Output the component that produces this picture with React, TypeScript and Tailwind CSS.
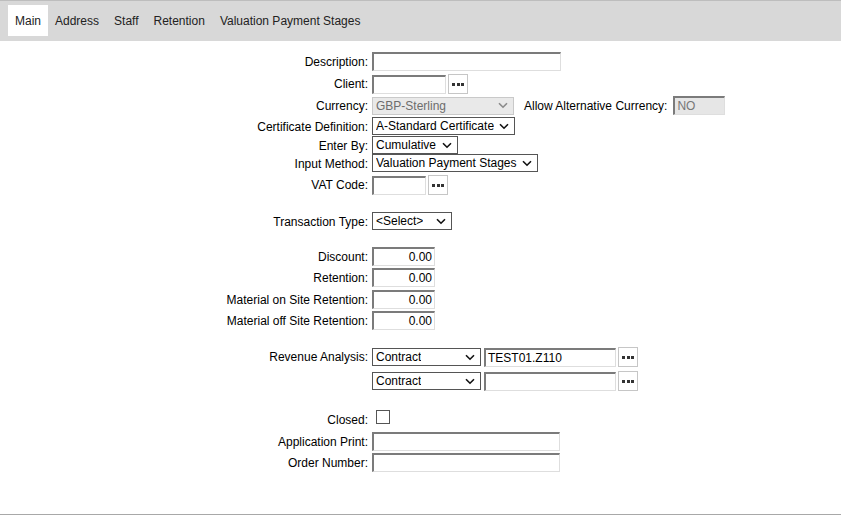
import React from 'react'

const tabs = ['Main', 'Address', 'Staff', 'Retention', 'Valuation Payment Stages']

function Chevron({ muted }: { muted?: boolean }) {
  return (
    <svg width="10" height="7" viewBox="0 0 10 7" className="shrink-0">
      <path d="M1 1.2 L5 5.2 L9 1.2" fill="none" stroke={muted ? '#8a8a8a' : '#111'} strokeWidth="1.6" />
    </svg>
  )
}

function Select({ value, w, disabled }: { value: string; w: string; disabled?: boolean }) {
  return (
    <div
      className={`${w} h-[18px] flex items-center justify-between pl-[3px] pr-[5px] border ${
        disabled ? 'bg-[#e9e9e9] border-[#c9c9c9] text-[#6d6d6d]' : 'bg-white border-[#555555] text-black'
      }`}
    >
      <span className="truncate">{value}</span>
      <Chevron muted={disabled} />
    </div>
  )
}

function TextInput({ w, value, right, disabled }: { w: string; value?: string; right?: boolean; disabled?: boolean }) {
  return (
    <div
      className={`${w} h-[19px] flex items-center border-t-2 border-l-2 border-r border-b border-t-[#7b7b7b] border-l-[#7b7b7b] border-r-[#dedede] border-b-[#dedede] px-[2px] ${
        right ? 'justify-end' : ''
      } ${disabled ? 'bg-[#e6e6e6] text-[#777777]' : 'bg-white text-black'}`}
    >
      {value}
    </div>
  )
}

function Dots() {
  return (
    <div className="w-[20px] h-[20px] border border-[#c6c6c6] bg-white flex items-center justify-center gap-[1.5px] ml-[2px]">
      <span className="w-[3px] h-[3px] bg-[#333]" />
      <span className="w-[3px] h-[3px] bg-[#333]" />
      <span className="w-[3px] h-[3px] bg-[#333]" />
    </div>
  )
}

function Row({ label, h, children }: { label?: string; h: string; children: React.ReactNode }) {
  return (
    <div className={`flex items-start ${h}`}>
      <div className="w-[372px] h-[19px] flex items-center justify-end pr-[4px]">{label ? `${label}:` : ''}</div>
      <div className="flex items-center">{children}</div>
    </div>
  )
}

export default function App() {
  return (
    <div className="w-[841px] h-[519px] bg-white text-[12px] text-black overflow-hidden flex flex-col" style={{ fontFamily: '"Liberation Sans", Arial, sans-serif' }}>
      {/* tab bar */}
      <div className="h-[41px] bg-[#d8d8d8] border-t border-[#bdbdbd] flex items-start pl-[8px] pt-[4px] shrink-0">
        {tabs.map((t, i) => (
          <div
            key={t}
            className={`h-[31px] px-[7px] flex items-center text-[#222] ${i === 0 ? 'bg-white' : ''} ${i >= 2 ? 'ml-[1px]' : ''}`}
          >
            {t}
          </div>
        ))}
      </div>

      {/* form */}
      <div className="flex-1 pt-[11px] flex flex-col">
        <Row label="Description" h="h-[22px]">
          <TextInput w="w-[189px]" />
        </Row>
        <Row label="Client" h="h-[22px]">
          <TextInput w="w-[74px]" />
          <Dots />
        </Row>
        <Row label="Currency" h="h-[21px]">
          <Select value="GBP-Sterling" w="w-[142px]" disabled />
          <span className="ml-[10px] mr-[6px]">Allow Alternative Currency:</span>
          <TextInput w="w-[52px]" value="NO" disabled />
        </Row>
        <Row label="Certificate Definition" h="h-[19px]">
          <Select value="A-Standard Certificate" w="w-[143px]" />
        </Row>
        <Row label="Enter By" h="h-[18px]">
          <Select value="Cumulative" w="w-[86px]" />
        </Row>
        <Row label="Input Method" h="h-[21px]">
          <Select value="Valuation Payment Stages" w="w-[166px]" />
        </Row>
        <Row label="VAT Code" h="h-[37px]">
          <TextInput w="w-[54px]" />
          <Dots />
        </Row>
        <Row label="Transaction Type" h="h-[35px]">
          <Select value="<Select>" w="w-[80px]" />
        </Row>
        <Row label="Discount" h="h-[21px]">
          <TextInput w="w-[63px]" value="0.00" right />
        </Row>
        <Row label="Retention" h="h-[22px]">
          <TextInput w="w-[63px]" value="0.00" right />
        </Row>
        <Row label="Material on Site Retention" h="h-[21px]">
          <TextInput w="w-[63px]" value="0.00" right />
        </Row>
        <Row label="Material off Site Retention" h="h-[36px]">
          <TextInput w="w-[63px]" value="0.00" right />
        </Row>
        <Row label="Revenue Analysis" h="h-[24px]">
          <Select value="Contract" w="w-[109px]" />
          <div className="ml-[3px]">
            <TextInput w="w-[132px]" value="TEST01.Z110" />
          </div>
          <Dots />
        </Row>
        <Row h="h-[39px]">
          <Select value="Contract" w="w-[109px]" />
          <div className="ml-[3px]">
            <TextInput w="w-[132px]" />
          </div>
          <Dots />
        </Row>
        <Row label="Closed" h="h-[22px]">
          <div className="ml-[4px] w-[14px] h-[14px] border border-[#555] bg-white" />
        </Row>
        <Row label="Application Print" h="h-[21px]">
          <TextInput w="w-[188px]" />
        </Row>
        <Row label="Order Number" h="h-[21px]">
          <TextInput w="w-[188px]" />
        </Row>
      </div>
      <div className="h-[5px] border-t border-[#a8a8a8] shrink-0" />
    </div>
  )
}
